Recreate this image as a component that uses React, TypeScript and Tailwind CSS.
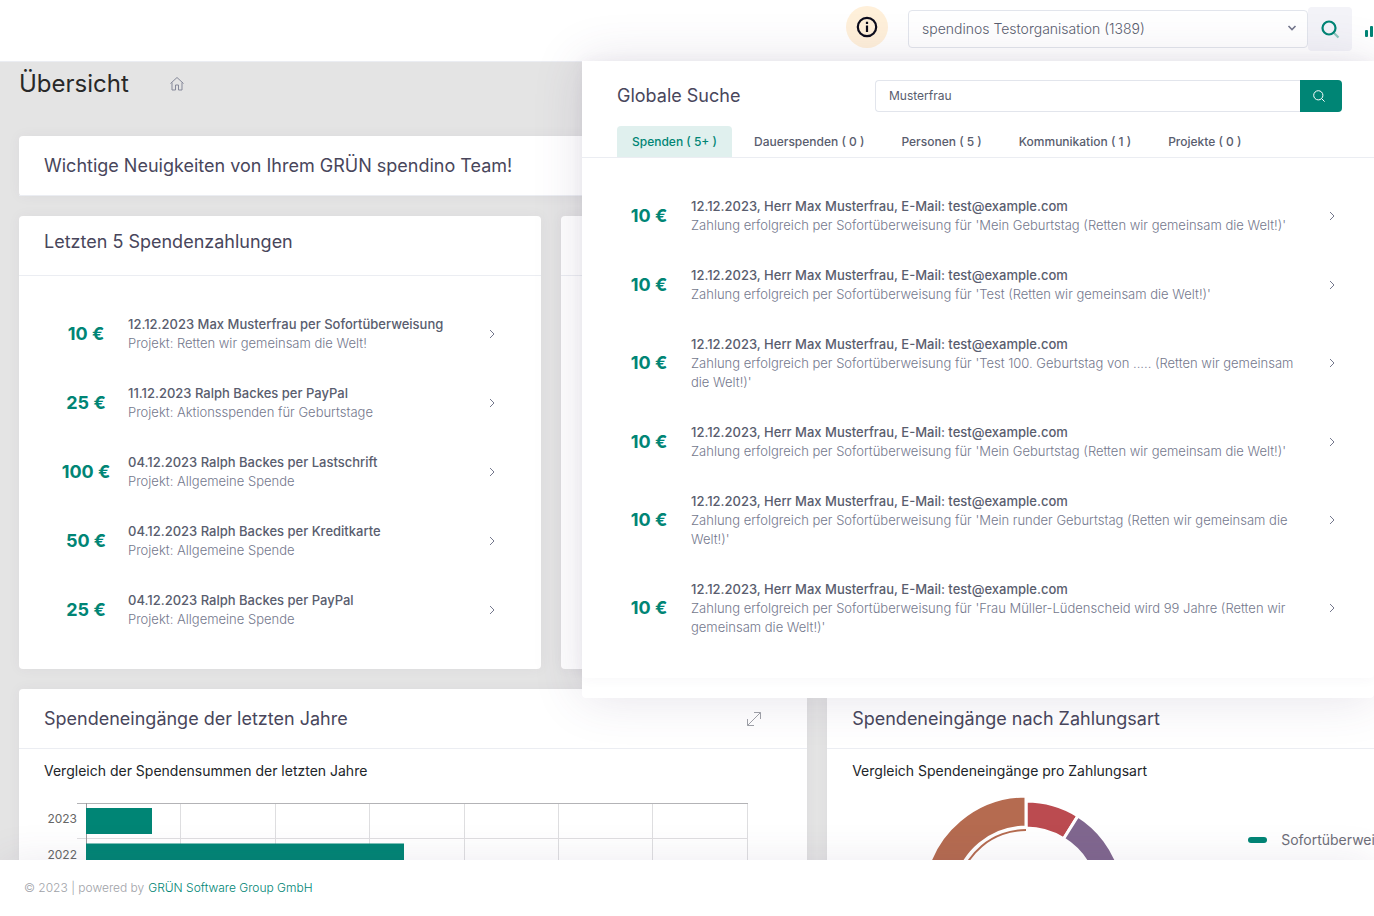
import { useState } from 'react';
import type { ReactNode } from 'react';
import { clsx } from 'clsx';

const donations = [
  { amount: '10 €', title: '12.12.2023 Max Musterfrau per Sofortüberweisung', project: 'Projekt: Retten wir gemeinsam die Welt!' },
  { amount: '25 €', title: '11.12.2023 Ralph Backes per PayPal', project: 'Projekt: Aktionsspenden für Geburtstage' },
  { amount: '100 €', title: '04.12.2023 Ralph Backes per Lastschrift', project: 'Projekt: Allgemeine Spende' },
  { amount: '50 €', title: '04.12.2023 Ralph Backes per Kreditkarte', project: 'Projekt: Allgemeine Spende' },
  { amount: '25 €', title: '04.12.2023 Ralph Backes per PayPal', project: 'Projekt: Allgemeine Spende' },
];

const resultTitle = '12.12.2023, Herr Max Musterfrau, E-Mail: test@example.com';

const results = [
  "Zahlung erfolgreich per Sofortüberweisung für 'Mein Geburtstag (Retten wir gemeinsam die Welt!)'",
  "Zahlung erfolgreich per Sofortüberweisung für 'Test (Retten wir gemeinsam die Welt!)'",
  "Zahlung erfolgreich per Sofortüberweisung für 'Test 100. Geburtstag von ..... (Retten wir gemeinsam\ndie Welt!)'",
  "Zahlung erfolgreich per Sofortüberweisung für 'Mein Geburtstag (Retten wir gemeinsam die Welt!)'",
  "Zahlung erfolgreich per Sofortüberweisung für 'Mein runder Geburtstag (Retten wir gemeinsam die\nWelt!)'",
  "Zahlung erfolgreich per Sofortüberweisung für 'Frau Müller-Lüdenscheid wird 99 Jahre (Retten wir\ngemeinsam die Welt!)'",
];

const tabs = ['Spenden ( 5+ )', 'Dauerspenden ( 0 )', 'Personen ( 5 )', 'Kommunikation ( 1 )', 'Projekte ( 0 )'];

function Row({ amount, title, text, wide }: { amount: string; title: string; text: string; wide?: boolean }) {
  return (
    <li>
      <a href="#" className="flex items-center py-[15px]">
        <span className="w-[84px] shrink-0 text-center text-lg font-bold text-[#008575]">{amount}</span>
        <span className="min-w-0 flex-1">
          <span className="block text-[13px] leading-5 font-medium text-[#595d6e]">{title}</span>
          <span className="block text-[13px] leading-[19px] font-light whitespace-pre-line text-[#74788d]">{text}</span>
        </span>
        <span className={clsx('flex shrink-0 justify-center', wide ? 'w-12' : 'w-5')}>
          <svg className="h-2.5 w-2.5" viewBox="0 0 10 10" fill="none" stroke="#74788d" strokeWidth="1">
            <path d="M3 1l4 4-4 4" />
          </svg>
        </span>
      </a>
    </li>
  );
}

function Card({ title, action, raised, children }: { title: string; action?: ReactNode; raised?: boolean; children?: ReactNode }) {
  return (
    <section className="rounded bg-white shadow-[0_0_13px_0_rgba(82,63,105,0.05)]">
      <div className={clsx('flex h-[60px] items-center justify-between border-b border-[#ebedf2] px-[25px]', raised && 'pb-2')}>
        <h2 className="text-lg text-[#48465b]">{title}</h2>
        {action}
      </div>
      {children}
    </section>
  );
}

function BarChart() {
  return (
    <svg className="block" width="720" height="220" viewBox="0 0 720 220">
      <path d="M136.5 7v213M231.5 7v213M325.5 7v213M420.5 7v213M514.5 7v213M608.5 7v213M703.5 7v213" stroke="#dedee0" />
      <path d="M33 42.5h671M33 78.5h671M33 114.5h671" stroke="#dedee0" />
      <path d="M33 7.5h671" stroke="#b3b3b6" />
      <path d="M42.5 7v213" stroke="#9a9a9e" />
      <rect x="42" y="12" width="66" height="26" fill="#008575" />
      <rect x="42" y="47.5" width="318" height="26" fill="#008575" />
      <g fill="#666" fontSize="12" textAnchor="end">
        <text x="33" y="27">2023</text>
        <text x="33" y="63">2022</text>
      </g>
    </svg>
  );
}

function Donut() {
  // Point on the ring, angle in degrees clockwise from the top
  const pt = (r: number, deg: number) => {
    const a = (deg * Math.PI) / 180;
    return `${110 + r * Math.sin(a)} ${110 - r * Math.cos(a)}`;
  };
  const slice = (outer: number, inner: number, from: number, to: number) => {
    const large = to - from > 180 ? 1 : 0;
    return `M${pt(outer, from)}A${outer} ${outer} 0 ${large} 1 ${pt(outer, to)}L${pt(inner, to)}A${inner} ${inner} 0 ${large} 0 ${pt(inner, from)}Z`;
  };
  return (
    <svg className="shrink-0" width="220" height="220" viewBox="0 0 220 220">
      <g stroke="#fff" strokeWidth="3">
        <path d={slice(98, 71, 0, 32)} fill="#bb4b50" />
        <path d={slice(98, 71, 32, 120)} fill="#80678f" />
        <path d={slice(98, 71, 120, 200)} fill="#008575" />
        <path d={slice(103, 72, 200, 360)} fill="#b56b50" />
      </g>
      <path d={slice(70, 68, 200, 360)} fill="#b56b50" />
    </svg>
  );
}

function SearchPanel() {
  const [query, setQuery] = useState('Musterfrau');
  const [active, setActive] = useState(0);

  return (
    <div className="absolute top-[61px] right-0 z-20 w-[792px] rounded-b bg-white pb-5 shadow-[0_0_50px_0_rgba(82,63,105,0.15)]">
      <div className="rounded-b pb-[26px] shadow-[0_0_13px_0_rgba(82,63,105,0.05)]">
        <form className="flex h-[65px] items-center justify-between pt-1 pr-8 pl-[35px]" onSubmit={(e) => e.preventDefault()}>
          <label htmlFor="search" className="text-lg text-[#48465b]">Globale Suche</label>
          <div className="flex">
            <input
              id="search"
              value={query}
              onChange={(e) => setQuery(e.target.value)}
              className="h-8 w-[425px] rounded-l-sm border border-r-0 border-[#e2e5ec] px-[13px] text-xs text-[#595d6e] outline-none"
            />
            <button type="submit" aria-label="Suchen" className="flex h-8 w-[42px] items-center rounded-r-sm bg-[#008575] pl-3">
              <svg className="h-3.5 w-3.5" viewBox="0 0 14 14" fill="none" stroke="#fff" strokeWidth="1">
                <circle cx="6.3" cy="6.3" r="4.6" />
                <path d="M9.6 9.6l3 3" />
              </svg>
            </button>
          </div>
        </form>

        {/* Tabs */}
        <div role="tablist" className="flex gap-[7px] border-b border-[#ebedf2] pl-[35px]">
          {tabs.map((tab, idx) => (
            <button
              key={tab}
              role="tab"
              aria-selected={idx === active}
              onClick={() => setActive(idx)}
              className={clsx(
                'h-[31px] rounded-t-sm px-[15px] text-xs font-medium',
                idx === active ? 'bg-[#e0f0ee] text-[#008575]' : 'text-[#595d6e]',
              )}
            >
              {tab}
            </button>
          ))}
        </div>

        <ul className="pt-[23px] pr-8 pl-[25px]">
          {results.map((text, idx) => (
            <Row key={idx} amount="10 €" title={resultTitle} text={text} />
          ))}
        </ul>
      </div>
    </div>
  );
}

export default function App() {
  return (
    <div className="relative flex h-screen flex-col overflow-hidden bg-[#e4e4e4] font-['Inter','Open_Sans',sans-serif]">
      <header className="flex h-[61px] shrink-0 items-start justify-end overflow-hidden bg-white">
        <button aria-label="Info" className="mt-1.5 mr-5 flex h-[42px] w-[42px] items-center justify-center rounded-full bg-[#fff0da]">
          <svg className="h-[22px] w-[22px]" viewBox="0 0 22 22" fill="none" stroke="#0c0c1c" strokeWidth="2.2">
            <circle cx="11" cy="11" r="9.2" />
            <path d="M11 9.4v6.6M11 5.8v2.2" />
          </svg>
        </button>
        <div className="relative mt-2.5">
          <select
            aria-label="Organisation"
            className="h-[38px] w-[400px] appearance-none rounded border border-[#e2e5ec] bg-white px-[13px] text-sm font-light text-[#595d6e]"
          >
            <option>spendinos Testorganisation (1389)</option>
          </select>
          <svg className="pointer-events-none absolute top-3.5 right-[11px] h-2 w-2.5" viewBox="0 0 10 8" fill="none" stroke="#74788d" strokeWidth="1.6">
            <path d="M1.5 2L5 5.5 8.5 2" />
          </svg>
        </div>
        <button aria-label="Suche" className="mt-[7px] flex h-11 w-11 items-center justify-center rounded bg-[#f3f3f8]">
          <svg className="h-5 w-5" viewBox="0 0 20 20" fill="none">
            <path d="M14 14l4.5 4.5" stroke="#8cc5be" strokeWidth="2.2" />
            <circle cx="9" cy="9" r="6.5" stroke="#008575" strokeWidth="2.2" />
          </svg>
        </button>
        <button aria-label="Statistik" className="mt-6 ml-3 w-2.5 overflow-hidden">
          <svg width="20" height="14" viewBox="0 0 20 14" fill="#008575">
            <rect x="1" y="6" width="3" height="7" rx="1" />
            <rect x="6" y="2" width="3" height="11" rx="1" />
            <rect x="11" y="4" width="3" height="9" rx="1" />
          </svg>
        </button>
      </header>

      <SearchPanel />

      <main className="-mr-2.5 flex min-h-0 flex-1 flex-col gap-5 overflow-hidden border-t border-[#ebedf2] pl-[19px]">
        <div className="flex h-[54px] shrink-0 items-start gap-10 pt-1">
          <h1 className="text-2xl leading-9 text-[#282828]">Übersicht</h1>
          <a href="#" aria-label="Startseite" className="mt-2.5">
            <svg className="h-4 w-4" viewBox="0 0 16 16" fill="none" stroke="#858899" strokeWidth="1">
              <path d="M1.5 7.5L8 1.5l6.5 6M3 6.5V14h3.5V9h3v5H13V6.5" />
            </svg>
          </a>
        </div>

        <Card title="Wichtige Neuigkeiten von Ihrem GRÜN spendino Team!" />

        <div className="grid shrink-0 grid-cols-[minmax(0,388fr)_minmax(0,612fr)] gap-5">
          <Card title="Letzten 5 Spendenzahlungen" raised>
            <ul className="px-[25px] pt-[23px] pb-[25px]">
              {donations.map((d, idx) => (
                <Row key={idx} amount={d.amount} title={d.title} text={d.project} wide />
              ))}
            </ul>
          </Card>
          <Card title="" />
        </div>

        <div className="grid shrink-0 grid-cols-[minmax(0,586fr)_minmax(0,414fr)] gap-5">
          <Card
            title="Spendeneingänge der letzten Jahre"
            action={
              <button aria-label="Vergrößern" className="mr-5">
                <svg className="h-4 w-4" viewBox="0 0 16 16" fill="none" stroke="#a0a2a8" strokeWidth="1">
                  <path d="M1.5 14.5l13-13M8 1.5h6.5V8M1.5 8v6.5H8" />
                </svg>
              </button>
            }
          >
            <div className="pl-[25px]">
              <p className="h-[47px] pt-3 text-sm text-[#212529]">Vergleich der Spendensummen der letzten Jahre</p>
              <BarChart />
            </div>
          </Card>
          <Card title="Spendeneingänge nach Zahlungsart">
            <div className="pl-[25px]">
              <p className="h-10 pt-3 text-sm text-[#212529]">Vergleich Spendeneingänge pro Zahlungsart</p>
              <div className="flex gap-28 pl-16">
                <Donut />
                <div className="flex h-[102px] items-center gap-3.5 whitespace-nowrap">
                  <span className="h-1.5 w-[19px] shrink-0 rounded-full bg-[#008575]" />
                  <span className="text-sm text-[#6e6e78]">Sofortüberweisung</span>
                </div>
              </div>
            </div>
          </Card>
        </div>
      </main>

      <footer className="z-10 flex h-14 shrink-0 items-center gap-1 bg-white pl-6 text-xs font-light text-[#a0a2a8] shadow-[0_0_40px_0_rgba(82,63,105,0.1)]">
        <span>© 2023 | powered by</span>
        <a href="#" className="text-[#008575]">GRÜN Software Group GmbH</a>
      </footer>
    </div>
  );
}
